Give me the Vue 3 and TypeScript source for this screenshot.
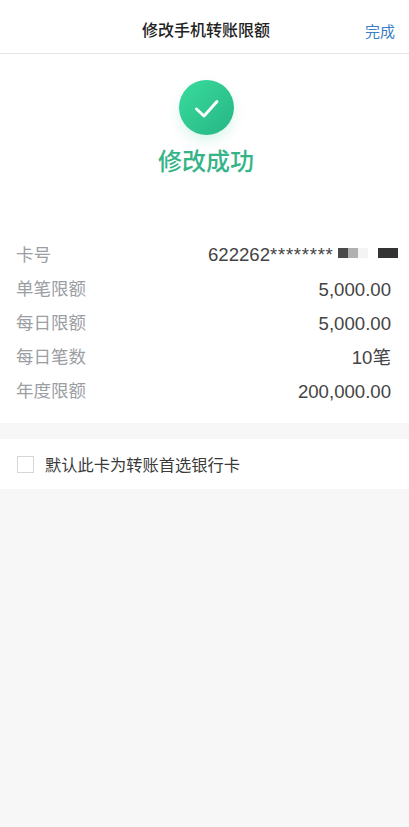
<script setup lang="ts">
interface Row { label: string; value: string }
const rows: Row[] = [
  { label: '单笔限额', value: '5,000.00' },
  { label: '每日限额', value: '5,000.00' },
  { label: '每日笔数', value: '10笔' },
  { label: '年度限额', value: '200,000.00' },
]
</script>

<template>
  <div class="page">
    <header class="nav">
      <span class="spacer"></span>
      <h1 class="title">修改手机转账限额</h1>
      <span class="done">完成</span>
    </header>
    <section class="top">
      <div class="hero">
        <div class="circle">
          <svg width="28" height="22" viewBox="0 0 28 22" fill="none">
            <path d="M4.5 12 L12 19 L25 4.5" stroke="#fff" stroke-width="3" stroke-linecap="round" stroke-linejoin="round" />
          </svg>
        </div>
        <div class="success">修改成功</div>
      </div>
      <div class="list">
        <div class="row">
          <span class="label">卡号</span>
          <span class="card">
            <span class="card-no">622262<span class="stars">********</span></span>
            <span class="mask">
              <i class="m1"></i><i class="m2"></i><i class="m3"></i><i class="m4"></i>
            </span>
          </span>
        </div>
        <div v-for="r in rows" :key="r.label" class="row">
          <span class="label">{{ r.label }}</span>
          <span class="value">{{ r.value }}</span>
        </div>
      </div>
    </section>
    <section class="check">
      <span class="box"></span>
      <span class="check-text">默认此卡为转账首选银行卡</span>
    </section>
  </div>
</template>

<style>
html, body { margin: 0; background: #f7f7f7; }
</style>

<style scoped>
.page {
  width: 409px;
  height: 827px;
  overflow: hidden;
  background: #f7f7f7;
  font-family: "Liberation Sans", "Noto Sans CJK SC", sans-serif;
}
.nav {
  height: 54px;
  box-sizing: border-box;
  padding: 0 14px 0 17px;
  background: #fff;
  border-bottom: 1px solid #e4e4e4;
  display: grid;
  grid-template-columns: 1fr auto 1fr;
  align-items: start;
}
.title {
  margin: 0;
  font-size: 16px;
  font-weight: 500;
  line-height: 62px;
  height: 53px;
  color: #222;
}
.done {
  justify-self: end;
  font-size: 15px;
  line-height: 64px;
  height: 53px;
  color: #3a80c8;
}
.top {
  background: #fff;
  height: 369px;
  box-sizing: border-box;
  padding-top: 26px;
}
.hero {
  padding-left: 3px;
  display: flex;
  flex-direction: column;
  align-items: center;
}
.circle {
  width: 55px;
  height: 55px;
  border-radius: 50%;
  background: linear-gradient(135deg, #38dc9c, #27b585);
  box-shadow: 0 6px 12px rgba(50, 200, 150, 0.18);
  display: flex;
  align-items: center;
  justify-content: center;
}
.success {
  margin-top: 9px;
  font-size: 24px;
  font-weight: 500;
  line-height: 36px;
  color: #35b488;
}
.list {
  margin-top: 56px;
  padding: 0 18px 0 16px;
}
.row {
  height: 34px;
  display: flex;
  align-items: center;
  justify-content: space-between;
}
.label { font-size: 17.5px; color: #9b9ea3; }
.value {
  font-size: 18.6px;
  line-height: 22px;
  color: #444;
  padding-top: 5px;
}
.card { display: flex; align-items: center; margin-right: -7px; }
.card-no {
  width: 130px;
  white-space: nowrap;
  font-size: 18.6px;
  line-height: 22px;
  color: #444;
  padding-top: 4px;
}
.stars { letter-spacing: 0.7px; }
.mask { display: flex; align-items: center; }
.mask i { display: block; height: 10px; }
.m1 { width: 10px; background: #4a4a4a; }
.m2 { width: 10px; background: #b0b0b0; }
.m3 { width: 10px; margin-right: 10px; background: #f4f4f4; }
.m4 { width: 20px; background: #333; }
.check {
  margin-top: 16px;
  height: 50px;
  background: #fff;
  display: flex;
  align-items: center;
  padding-left: 17px;
}
.box {
  width: 15px;
  height: 15px;
  border: 1px solid #d6d6d6;
  background: #fff;
  flex: none;
}
.check-text {
  margin-left: 11px;
  font-size: 16.25px;
  color: #3a3a3a;
}
</style>
